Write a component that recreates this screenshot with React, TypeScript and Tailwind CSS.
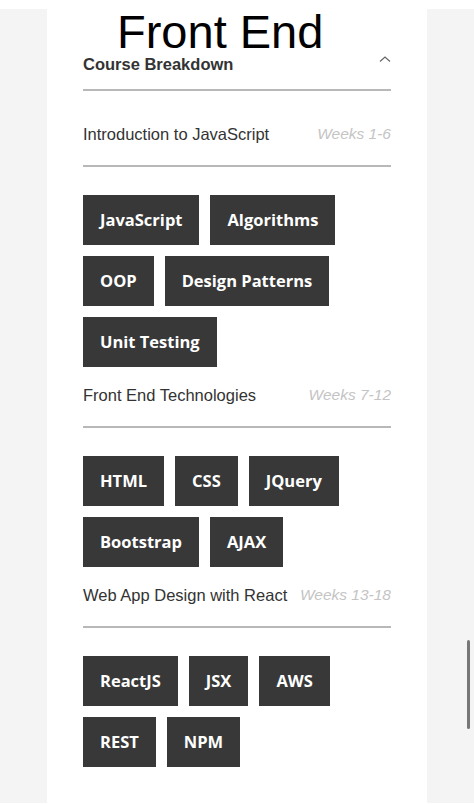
const sections = [
  {
    title: "Introduction to JavaScript",
    weeks: "Weeks 1-6",
    tags: ["JavaScript", "Algorithms", "OOP", "Design Patterns", "Unit Testing"],
  },
  {
    title: "Front End Technologies",
    weeks: "Weeks 7-12",
    tags: ["HTML", "CSS", "JQuery", "Bootstrap", "AJAX"],
  },
  {
    title: "Web App Design with React",
    weeks: "Weeks 13-18",
    tags: ["ReactJS", "JSX", "AWS", "REST", "NPM"],
  },
];

function Tag({ label }: { label: string }) {
  return (
    <span className="flex h-[50px] items-center bg-[#383838] px-[17px] font-['Open_Sans',sans-serif] text-[16.5px] font-bold text-white">
      {label}
    </span>
  );
}

export default function App() {
  return (
    <div className="relative h-[804px] overflow-hidden bg-white font-['Liberation_Sans',Arial,sans-serif]">
      <div className="mt-[9px] flex h-[794px]">
        <div className="w-[47px] bg-[#f4f4f4]" />
        <div className="w-[380px] bg-white px-[36px]">
          <h1 className="pl-[34px] text-[47px] leading-[45px] text-black">Front End</h1>
          <div className="flex items-center justify-between border-b-2 border-[#b8b8b8] pb-[15px]">
            <h2 className="text-[16.5px] font-bold leading-[20px] text-[#333]">Course Breakdown</h2>
            <svg width="12" height="6" viewBox="0 0 12 6" className="mb-[10px]">
              <path d="M1 5.5 L6 1 L11 5.5" fill="none" stroke="#666" strokeWidth="1.2" />
            </svg>
          </div>
          {sections.map((s, i) => (
            <div key={s.title}>
              <div
                className={
                  "flex items-center justify-between border-b-2 border-[#b8b8b8] pb-[21px] " +
                  (i === 0 ? "pt-[33px]" : "pt-[18px]")
                }
              >
                <span className="text-[16.5px] leading-[20px] text-[#333]">{s.title}</span>
                <span className="text-[15.5px] italic leading-[20px] text-[#c4c4c4]">{s.weeks}</span>
              </div>
              <div className="mt-[28px] flex flex-wrap gap-x-[11px] gap-y-[11px]">
                {s.tags.map((t) => (
                  <Tag key={t} label={t} />
                ))}
              </div>
            </div>
          ))}
        </div>
        <div className="w-[47px] bg-[#f4f4f4]" />
      </div>
      <div className="absolute left-[467px] top-[640px] h-[89px] w-[3px] rounded-full bg-[#777]" />
    </div>
  );
}
